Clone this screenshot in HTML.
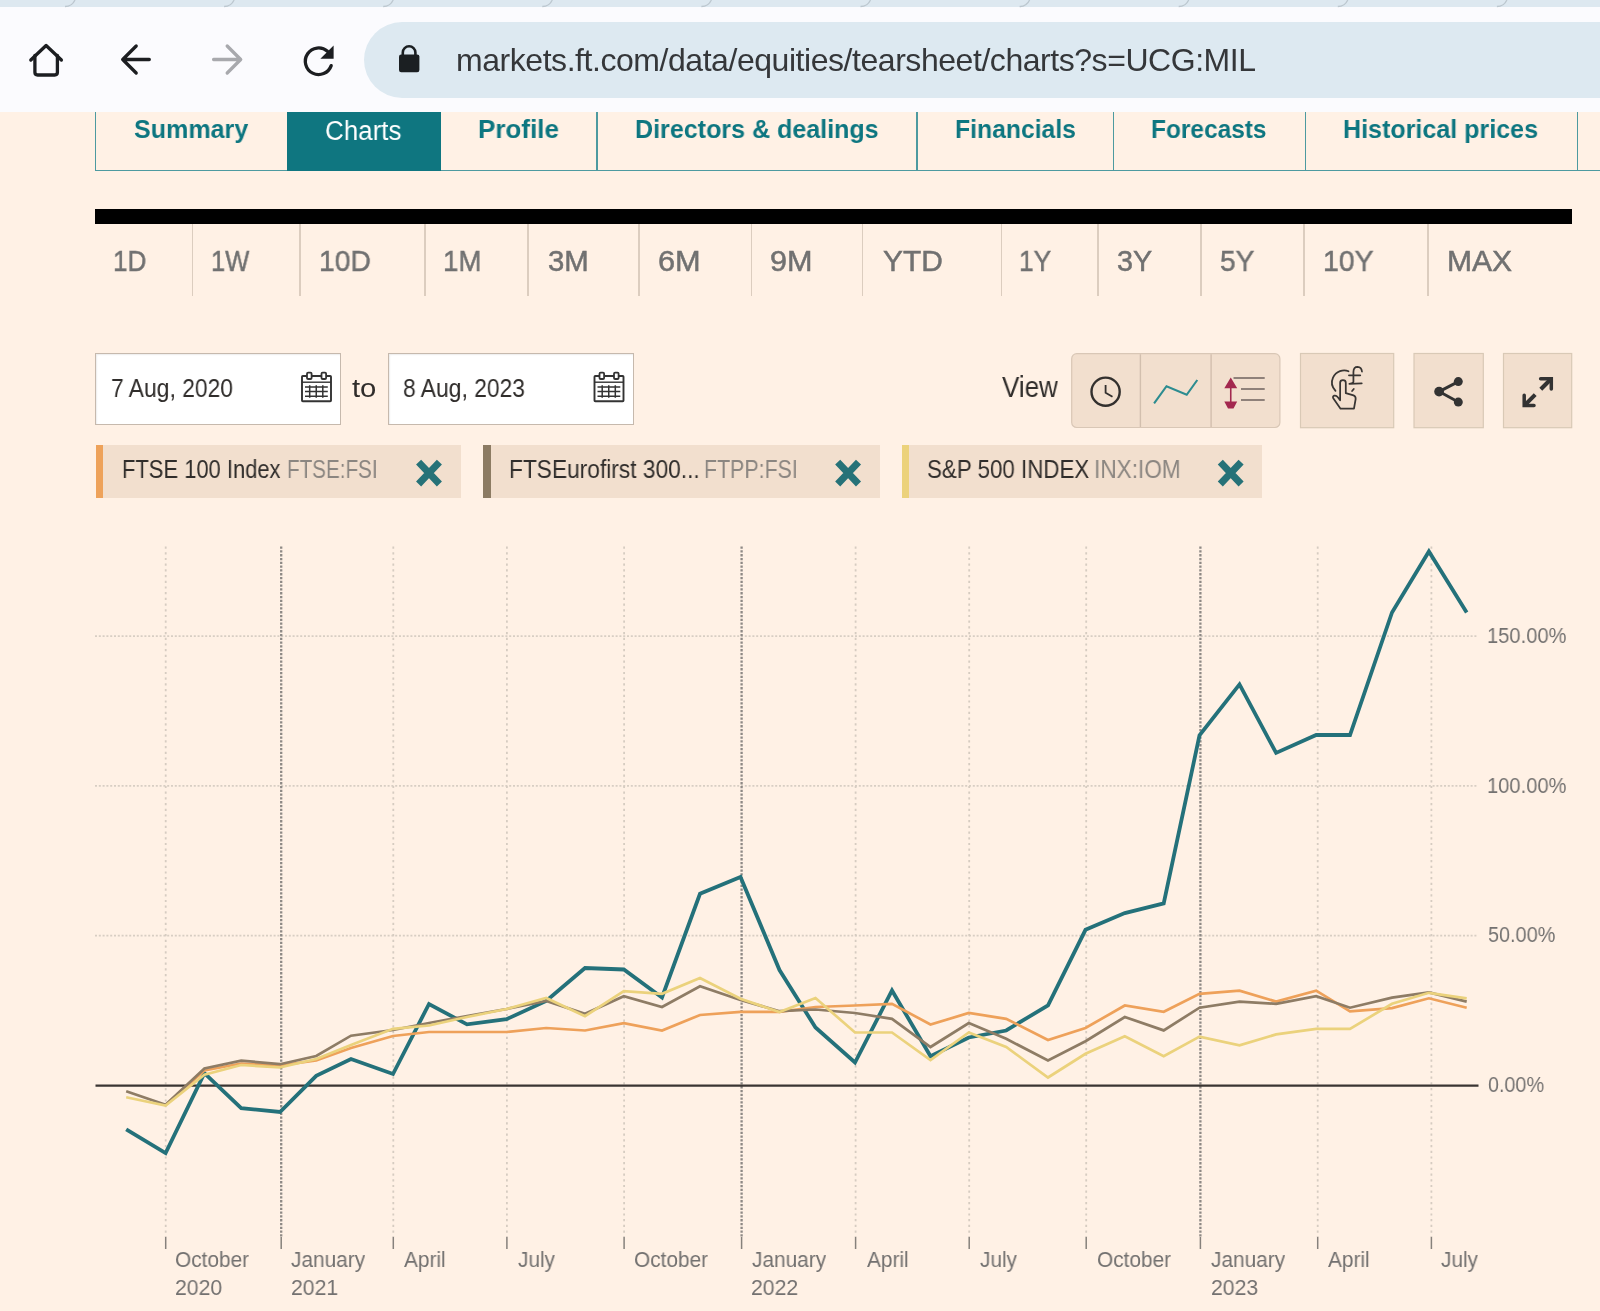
<!DOCTYPE html>
<html><head><meta charset="utf-8">
<style>
*{margin:0;padding:0;box-sizing:border-box}
html,body{width:1600px;height:1311px;overflow:hidden;background:#fff1e5;font-family:"Liberation Sans",sans-serif}
.abs{position:absolute}
#strip{left:0;top:0;width:1600px;height:7px;background:#dde8f0}
#toolbar{left:0;top:7px;width:1600px;height:105px;background:#fbfbfe}
#url{left:364px;top:22px;width:1300px;height:76px;border-radius:38px;background:#dde9f1}
#urltext{will-change:transform;left:456px;top:40px;font-size:32px;letter-spacing:-0.45px;color:#35373a;white-space:nowrap;line-height:40px}
.tab{position:absolute;top:112px;height:58px;font-size:25px;font-weight:bold;color:#0d7680;text-align:center;line-height:36px}
.sep{position:absolute;background:#4d9aa0;width:1.5px}
.per{position:absolute;top:240px;font-size:28px;color:#76716c;line-height:40px;white-space:nowrap}
.psep{position:absolute;top:224px;height:72px;width:1.5px;background:#dccdbf}
.datebox{position:absolute;top:353px;height:72px;width:246px;background:#fff;border:1.5px solid #c6b9ad;box-shadow:inset 1px 1px 1.5px rgba(0,0,0,.08)}
.datetxt{position:absolute;top:19px;left:15px;font-size:24px;color:#33302e;line-height:30px;white-space:nowrap}
.chip{position:absolute;top:445.2px;height:52.8px;background:#f2dfce}
.chipbar{position:absolute;left:0;top:0;width:7.6px;height:53px}
.chiptxt{position:absolute;top:11px;font-size:24px;color:#33302e;line-height:30px;white-space:nowrap}
.chiptxt span{color:#807973}
.btn{position:absolute;top:353px;height:75px;background:#f2dfce;border:1.5px solid #ddcbbb}
.ylab{position:absolute;left:1488px;font-size:20px;color:#6f6a66;line-height:24px;white-space:nowrap}
.xlab{position:absolute;top:1244px;font-size:21px;color:#6f6a66;line-height:28px;white-space:nowrap}
.t{position:absolute;white-space:nowrap;line-height:1;transform-origin:0 0;will-change:transform}
</style></head><body>
<div id="strip" class="abs"></div>
<div id="toolbar" class="abs"></div>
<div id="url" class="abs"></div>
<div id="urltext" class="abs">markets.ft.com/data/equities/tearsheet/charts?s=UCG:MIL</div>
<svg class="abs" style="left:0;top:0" width="1600" height="112" viewBox="0 0 1600 112">
<g fill="none" stroke="#bcc7cf" stroke-width="1.3"><path d="M65.0 6.5 Q72.0 6.5 75.0 0" /><path d="M224.1 6.5 Q231.1 6.5 234.1 0" /><path d="M383.2 6.5 Q390.2 6.5 393.2 0" /><path d="M542.3 6.5 Q549.3 6.5 552.3 0" /><path d="M701.4 6.5 Q708.4 6.5 711.4 0" /><path d="M860.5 6.5 Q867.5 6.5 870.5 0" /><path d="M1019.6 6.5 Q1026.6 6.5 1029.6 0" /><path d="M1178.7 6.5 Q1185.7 6.5 1188.7 0" /><path d="M1337.8 6.5 Q1344.8 6.5 1347.8 0" /><path d="M1496.9 6.5 Q1503.9 6.5 1506.9 0" /></g>
<g fill="none" stroke="#1c1e21" stroke-width="3.3" stroke-linecap="round" stroke-linejoin="round">
<path d="M30.8 60 L46.1 45.5 L61.4 60"/>
<path d="M34.9 55.5 V72.3 Q34.9 75 37.6 75 H54.7 Q57.4 75 57.4 72.3 V55.5"/>
<path d="M123.5 59.5 H149.3 M136.2 46 L122.7 59.5 L136.2 73"/>
<path d="M331.2 65.6 A13.3 13.3 0 1 1 327.5 51.3"/>
</g>
<path d="M213.6 59.5 H240.5 M227.2 46 L240.7 59.5 L227.2 73" fill="none" stroke="#a8a9ad" stroke-width="3.3" stroke-linecap="round" stroke-linejoin="round"/>
<path d="M333.6 45.6 V58.8 H320.4 Z" fill="#1c1e21"/>
<rect x="399" y="54.4" width="20.4" height="17.8" rx="2.2" fill="#1b1f22"/>
<path d="M402.8 55.5 V52.5 A6.3 6.3 0 0 1 415.4 52.5 V55.5" fill="none" stroke="#1b1f22" stroke-width="2.6"/>
</svg>
<!-- tabs -->
<div class="abs" style="left:95px;top:112px;width:1505px;height:59px;border-left:1.5px solid #4d9aa0;border-bottom:1.5px solid #4d9aa0"></div>
<div class="abs" style="left:287px;top:112px;width:153.5px;height:58.5px;background:#0f7680"></div>
<div class="sep" style="left:596.2px;top:112px;height:58px"></div>
<div class="sep" style="left:916px;top:112px;height:58px"></div>
<div class="sep" style="left:1112.8px;top:112px;height:58px"></div>
<div class="sep" style="left:1304.5px;top:112px;height:58px"></div>
<div class="sep" style="left:1576.5px;top:112px;height:58px"></div>
<div class="t" style="left:133.85px;top:116.28px;font-size:26.60px;font-weight:bold;color:#0d7680;transform:scaleX(0.9424)">Summary</div>
<div class="t" style="left:325.45px;top:117.22px;font-size:27.62px;color:#fff;transform:scaleX(0.9401)">Charts</div>
<div class="t" style="left:478.21px;top:116.28px;font-size:26.60px;font-weight:bold;color:#0d7680;transform:scaleX(0.9780)">Profile</div>
<div class="t" style="left:634.57px;top:116.28px;font-size:26.60px;font-weight:bold;color:#0d7680;transform:scaleX(0.9422)">Directors &amp; dealings</div>
<div class="t" style="left:954.79px;top:116.28px;font-size:26.60px;font-weight:bold;color:#0d7680;transform:scaleX(0.9295)">Financials</div>
<div class="t" style="left:1151.41px;top:116.28px;font-size:26.60px;font-weight:bold;color:#0d7680;transform:scaleX(0.9195)">Forecasts</div>
<div class="t" style="left:1343.27px;top:116.28px;font-size:26.60px;font-weight:bold;color:#0d7680;transform:scaleX(0.9425)">Historical prices</div>


<!-- periods -->
<div class="abs" style="left:95px;top:209px;width:1477px;height:15px;background:#000"></div>
<div class="psep" style="left:191.75px"></div>
<div class="psep" style="left:299.35px"></div>
<div class="psep" style="left:424.25px"></div>
<div class="psep" style="left:527.25px"></div>
<div class="psep" style="left:638.00px"></div>
<div class="psep" style="left:750.50px"></div>
<div class="psep" style="left:861.75px"></div>
<div class="psep" style="left:1000.50px"></div>
<div class="psep" style="left:1097.25px"></div>
<div class="psep" style="left:1200.25px"></div>
<div class="psep" style="left:1303.25px"></div>
<div class="psep" style="left:1427.25px"></div>
<div class="datebox" style="left:95px"></div>
<div class="datebox" style="left:388px"></div>
<div class="chip" style="left:95.75px;width:364.9px"><div class="chipbar" style="background:#eea25a"></div></div>
<div class="chip" style="left:483px;width:397.3px"><div class="chipbar" style="background:#8c7b63"></div></div>
<div class="chip" style="left:901.8px;width:360.2px"><div class="chipbar" style="background:#ecd27b"></div></div>
<svg class="abs" style="left:0;top:340px" width="1600" height="170" viewBox="0 340 1600 170">
<g fill="none" stroke="#333" stroke-linecap="butt">
<rect x="302" y="376" width="29" height="25.2" rx="0.8" stroke-width="1.9"/>
<path d="M302 382.2 H331" stroke-width="1.4"/>
<rect x="307" y="372.6" width="4.6" height="6.4" rx="1.1" stroke-width="1.8" fill="#fff"/>
<rect x="321.5" y="372.6" width="4.6" height="6.4" rx="1.1" stroke-width="1.8" fill="#fff"/>
<path d="M305 386.9 H327.8 M305 391.6 H327.8 M305 396.25 H327.8 M309.7 385.3 V397.8 M316.25 385.3 V397.8 M322.8 385.3 V397.8" stroke-width="1.5"/>
</g>
<g transform="translate(292.5 0)" fill="none" stroke="#333" stroke-linecap="butt">
<rect x="302" y="376" width="29" height="25.2" rx="0.8" stroke-width="1.9"/>
<path d="M302 382.2 H331" stroke-width="1.4"/>
<rect x="307" y="372.6" width="4.6" height="6.4" rx="1.1" stroke-width="1.8" fill="#fff"/>
<rect x="321.5" y="372.6" width="4.6" height="6.4" rx="1.1" stroke-width="1.8" fill="#fff"/>
<path d="M305 386.9 H327.8 M305 391.6 H327.8 M305 396.25 H327.8 M309.7 385.3 V397.8 M316.25 385.3 V397.8 M322.8 385.3 V397.8" stroke-width="1.5"/>
</g>
<!-- view group -->
<rect x="1071.7" y="353.7" width="208.2" height="73.8" rx="5" fill="#f2dfce" stroke="#d9c7b6" stroke-width="1.2"/>
<path d="M1140.4 354.3 V427 M1211.1 354.3 V427" stroke="#d2bfae" stroke-width="1.4"/>
<circle cx="1105.6" cy="391.7" r="14.1" fill="none" stroke="#33302e" stroke-width="2.4"/>
<path d="M1105.6 385.1 V392.7 L1112.5 396.8" fill="none" stroke="#33302e" stroke-width="1.8"/>
<path d="M1154.1 403.3 L1166.5 386.2 L1186.7 394.8 L1197.3 380" fill="none" stroke="#2c8c90" stroke-width="2.1"/>
<path d="M1230.75 384 V403" stroke="#a3284f" stroke-width="1.6"/>
<path d="M1230.75 377.4 L1237.2 388.2 H1224.3 Z M1224.3 401.5 H1237.2 L1233.5 408.4 H1228 Z" fill="#a3284f"/>
<path d="M1233.5 378 H1264.7 M1241 388.9 H1264.7 M1241 400 H1264.7" stroke="#8f817a" stroke-width="2"/>
<!-- buttons -->
<rect x="1300.5" y="353.5" width="93.2" height="74.2" fill="#f2dfce" stroke="#d9c9b6" stroke-width="1.2"/>
<rect x="1414" y="353.5" width="69.3" height="74.2" fill="#f2dfce" stroke="#d9c9b6" stroke-width="1.2"/>
<rect x="1503.5" y="353.5" width="68.2" height="74.2" fill="#f2dfce" stroke="#d9c9b6" stroke-width="1.2"/>
<g transform="translate(1320 360) scale(0.041946)" fill="none" stroke="#383533" stroke-width="42" stroke-linecap="round" stroke-linejoin="round">
<path d="M680 268 C560 215 380 260 310 420 C255 540 290 650 370 735"/>
<path d="M615 540 L615 790 L800 845 Q855 865 850 930 L810 1160 L490 1160 L320 920 Q290 870 340 850 Q400 830 480 960 L480 540 Q480 480 548 480 Q615 480 615 540 Z"/>
<path d="M765 740 L805 690"/>
<path d="M1000 275 Q990 170 895 165 Q800 165 797 285 L797 520 Q790 560 700 568 M700 568 L995 555 M690 365 L960 365"/>
</g>
<g fill="#333" stroke="#333">
<path d="M1439.1 391.6 L1458.3 381.6 M1439.1 391.6 L1458.3 402.1" stroke-width="2.9" fill="none"/>
<circle cx="1458.3" cy="381.6" r="4.5" stroke="none"/>
<circle cx="1439.1" cy="391.6" r="4.9" stroke="none"/>
<circle cx="1458.3" cy="402.1" r="4.5" stroke="none"/>
</g>
<g stroke="#333" fill="none" stroke-linecap="round" stroke-linejoin="miter" stroke-width="3.5">
<path d="M1540.6 378.7 H1551.3 V389"/>
<path d="M1524.2 395.3 V405.4 H1534"/>
</g>
<path d="M1551 379 L1540.8 389.2 M1535.2 394.6 L1524.6 405.2" stroke="#333" stroke-width="4.1"/>
<g stroke="#267278" stroke-width="7" stroke-linecap="butt">
<path d="M418.6 462.2 L439.4 484 M439.4 462.2 L418.6 484"/>
<path d="M837.7 462.2 L858.5 484 M858.5 462.2 L837.7 484"/>
<path d="M1220.3 462.2 L1241.1 484 M1241.1 462.2 L1220.3 484"/>
</g>
</svg>

<div class="t" style="left:112.95px;top:246.64px;font-size:28.78px;color:#717171;transform:scaleX(0.9055);-webkit-text-stroke:0.5px #717171">1D</div>
<div class="t" style="left:210.98px;top:246.64px;font-size:28.78px;color:#717171;transform:scaleX(0.8883);-webkit-text-stroke:0.5px #717171">1W</div>
<div class="t" style="left:318.78px;top:246.64px;font-size:28.78px;color:#717171;transform:scaleX(0.9825);-webkit-text-stroke:0.5px #717171">10D</div>
<div class="t" style="left:442.52px;top:246.64px;font-size:28.78px;color:#717171;transform:scaleX(0.9633);-webkit-text-stroke:0.5px #717171">1M</div>
<div class="t" style="left:548.43px;top:246.64px;font-size:28.78px;color:#717171;transform:scaleX(1.0191);-webkit-text-stroke:0.5px #717171">3M</div>
<div class="t" style="left:658.36px;top:246.64px;font-size:28.78px;color:#717171;transform:scaleX(1.0687);-webkit-text-stroke:0.5px #717171">6M</div>
<div class="t" style="left:769.52px;top:246.64px;font-size:28.78px;color:#717171;transform:scaleX(1.0645);-webkit-text-stroke:0.5px #717171">9M</div>
<div class="t" style="left:882.65px;top:246.64px;font-size:28.78px;color:#717171;transform:scaleX(1.0388);-webkit-text-stroke:0.5px #717171">YTD</div>
<div class="t" style="left:1018.93px;top:246.64px;font-size:28.78px;color:#717171;transform:scaleX(0.9142);-webkit-text-stroke:0.5px #717171">1Y</div>
<div class="t" style="left:1117.26px;top:246.64px;font-size:28.78px;color:#717171;transform:scaleX(0.9915);-webkit-text-stroke:0.5px #717171">3Y</div>
<div class="t" style="left:1219.78px;top:246.64px;font-size:28.78px;color:#717171;transform:scaleX(0.9765);-webkit-text-stroke:0.5px #717171">5Y</div>
<div class="t" style="left:1322.52px;top:246.64px;font-size:28.78px;color:#717171;transform:scaleX(0.9876);-webkit-text-stroke:0.5px #717171">10Y</div>
<div class="t" style="left:1447.24px;top:246.64px;font-size:28.78px;color:#717171;transform:scaleX(1.0449);-webkit-text-stroke:0.5px #717171">MAX</div>
<div class="t" style="left:110.76px;top:375.25px;font-size:26.16px;color:#302d2b;transform:scaleX(0.8737)">7 Aug, 2020</div>
<div class="t" style="left:402.57px;top:375.25px;font-size:26.16px;color:#302d2b;transform:scaleX(0.8737)">8 Aug, 2023</div>
<div class="t" style="left:351.76px;top:374.89px;font-size:26.00px;color:#302d2b;transform:scaleX(1.1243)">to</div>
<div class="t" style="left:1002.37px;top:373.06px;font-size:28.63px;color:#302d2b;transform:scaleX(0.9085)">View</div>
<div class="t" style="left:122.24px;top:458.36px;font-size:24.85px;color:#302d2b;transform:scaleX(0.8831)">FTSE 100 Index</div>
<div class="t" style="left:286.85px;top:458.36px;font-size:24.85px;color:#8b8681;transform:scaleX(0.8305)">FTSE:FSI</div>
<div class="t" style="left:508.88px;top:458.36px;font-size:24.85px;color:#302d2b;transform:scaleX(0.9148)">FTSEurofirst 300...</div>
<div class="t" style="left:703.69px;top:458.36px;font-size:24.85px;color:#8b8681;transform:scaleX(0.8600)">FTPP:FSI</div>
<div class="t" style="left:927.49px;top:458.36px;font-size:24.85px;color:#302d2b;transform:scaleX(0.8997)">S&amp;P 500 INDEX</div>
<div class="t" style="left:1093.76px;top:458.36px;font-size:24.85px;color:#8b8681;transform:scaleX(0.9102)">INX:IOM</div>

<!-- chart -->
<svg class="abs" style="left:0;top:520px" width="1600" height="791" viewBox="0 520 1600 791">
<g stroke="#d8cec3" stroke-width="1.8" stroke-dasharray="2 1.8">
<path d="M95 636.1 H1477"/>
<path d="M95 785.9 H1477"/>
<path d="M95 935.7 H1477"/>
</g>
<g stroke="#d6ccc1" stroke-width="1.8" stroke-dasharray="2.2 3.5">
<path d="M165.7 546.5 V1237"/>
<path d="M393.3 546.5 V1237"/>
<path d="M506.9 546.5 V1237"/>
<path d="M624.1 546.5 V1237"/>
<path d="M855.6 546.5 V1237"/>
<path d="M969.2 546.5 V1237"/>
<path d="M1086.2 546.5 V1237"/>
<path d="M1317.7 546.5 V1237"/>
<path d="M1431.4 546.5 V1237"/>
</g>
<g stroke="#8e8985" stroke-width="2.3" stroke-dasharray="2.3 1.5">
<path d="M281.2 546.5 V1237"/>
<path d="M741.6 546.5 V1237"/>
<path d="M1200.4 546.5 V1237"/>
</g>
<g stroke="#86817c" stroke-width="1.5">
<path d="M165.7 1237 V1249"/>
<path d="M281.2 1237 V1249"/>
<path d="M393.3 1237 V1249"/>
<path d="M506.9 1237 V1249"/>
<path d="M624.1 1237 V1249"/>
<path d="M741.6 1237 V1249"/>
<path d="M855.6 1237 V1249"/>
<path d="M969.2 1237 V1249"/>
<path d="M1086.2 1237 V1249"/>
<path d="M1200.4 1237 V1249"/>
<path d="M1317.7 1237 V1249"/>
<path d="M1431.4 1237 V1249"/>
</g>
<path d="M95.5 1085.6 H1478.5" stroke="#3a3532" stroke-width="2.2"/>
<polyline points="126.2,1129.4 165.6,1153.1 204.4,1073.1 241.2,1108.1 280.0,1112.0 316.2,1075.8 351.0,1059.0 393.0,1074.0 429.0,1004.0 467.0,1024.4 506.5,1019.2 546.2,1001.0 585.0,968.0 623.8,969.5 662.0,997.5 700.0,893.8 740.5,876.9 779.5,970.0 815.5,1027.5 855.0,1062.5 892.0,990.5 930.5,1056.2 968.8,1037.5 1006.2,1030.5 1048.0,1005.3 1085.5,929.8 1124.8,913.1 1163.7,903.4 1199.5,735.4 1239.5,684.4 1276.1,752.9 1316.2,735.0 1350.0,735.0 1392.0,612.5 1428.9,551.4 1466.7,612.5" fill="none" stroke="#24717a" stroke-width="3.8" stroke-linejoin="miter"/>
<polyline points="165.6,1105.0 204.4,1070.5 241.2,1063.5 280.0,1065.5 316.2,1060.4 351.0,1048.0 393.0,1036.0 429.0,1032.0 467.0,1032.0 506.5,1032.0 546.2,1028.0 585.0,1030.5 623.8,1023.2 662.0,1030.5 700.0,1015.0 740.5,1011.8 779.5,1011.8 815.5,1007.0 855.0,1005.5 892.0,1003.8 930.5,1024.5 968.8,1013.0 1006.2,1018.8 1048.0,1040.0 1085.5,1028.0 1124.8,1005.5 1163.7,1011.8 1199.5,993.9 1239.5,990.6 1276.1,1001.6 1316.2,990.6 1350.0,1011.4 1392.0,1008.1 1428.9,998.3 1466.7,1007.7" fill="none" stroke="#eea15a" stroke-width="2.7" stroke-linejoin="miter"/>
<polyline points="126.2,1091.2 165.6,1104.8 204.4,1068.5 241.2,1060.6 280.0,1064.2 316.2,1056.0 351.0,1035.7 393.0,1030.0 429.0,1023.0 467.0,1016.0 506.5,1009.0 546.2,1001.0 585.0,1013.8 623.8,996.2 662.0,1007.0 700.0,986.2 740.5,1000.0 779.5,1011.2 815.5,1009.5 855.0,1013.0 892.0,1018.8 930.5,1047.0 968.8,1023.0 1006.2,1038.8 1048.0,1060.5 1085.5,1041.2 1124.8,1017.0 1163.7,1030.4 1199.5,1007.7 1239.5,1001.6 1276.1,1003.8 1316.2,996.1 1350.0,1007.7 1392.0,997.6 1428.9,992.4 1466.7,1001.6" fill="none" stroke="#8e7c65" stroke-width="2.7" stroke-linejoin="miter"/>
<polyline points="126.2,1097.2 165.6,1105.6 204.4,1074.8 241.2,1065.0 280.0,1067.5 316.2,1059.0 351.0,1045.0 393.0,1028.8 429.0,1025.5 467.0,1017.0 506.5,1009.0 546.2,998.0 585.0,1016.2 623.8,991.2 662.0,993.8 700.0,978.0 740.5,998.8 779.5,1012.0 815.5,998.0 855.0,1032.5 892.0,1032.5 930.5,1060.0 968.8,1032.5 1006.2,1047.0 1048.0,1077.5 1085.5,1053.8 1124.8,1036.2 1163.7,1056.2 1199.5,1036.6 1239.5,1045.3 1276.1,1034.4 1316.2,1028.9 1350.0,1028.9 1392.0,1003.8 1428.9,992.8 1466.7,998.3" fill="none" stroke="#ebd27c" stroke-width="2.7" stroke-linejoin="miter"/>
</svg>

<div class="t" style="left:1486.99px;top:624.77px;font-size:21.66px;color:#737170;transform:scaleX(0.9295)">150.00%</div>
<div class="t" style="left:1486.99px;top:774.57px;font-size:21.66px;color:#737170;transform:scaleX(0.9295)">100.00%</div>
<div class="t" style="left:1487.71px;top:924.47px;font-size:21.66px;color:#737170;transform:scaleX(0.9165)">50.00%</div>
<div class="t" style="left:1487.71px;top:1074.17px;font-size:21.66px;color:#737170;transform:scaleX(0.9118)">0.00%</div>
<div class="t" style="left:175.26px;top:1248.74px;font-size:21.80px;color:#737170;transform:scaleX(0.9550)">October</div>
<div class="t" style="left:175.14px;top:1276.54px;font-size:21.80px;color:#737170;transform:scaleX(0.9750)">2020</div>
<div class="t" style="left:291.39px;top:1248.74px;font-size:21.80px;color:#737170;transform:scaleX(0.9550)">January</div>
<div class="t" style="left:290.64px;top:1276.54px;font-size:21.80px;color:#737170;transform:scaleX(0.9750)">2021</div>
<div class="t" style="left:403.80px;top:1248.74px;font-size:21.80px;color:#737170;transform:scaleX(0.9550)">April</div>
<div class="t" style="left:517.69px;top:1248.74px;font-size:21.80px;color:#737170;transform:scaleX(0.9550)">July</div>
<div class="t" style="left:634.16px;top:1248.74px;font-size:21.80px;color:#737170;transform:scaleX(0.9550)">October</div>
<div class="t" style="left:752.09px;top:1248.74px;font-size:21.80px;color:#737170;transform:scaleX(0.9550)">January</div>
<div class="t" style="left:751.34px;top:1276.54px;font-size:21.80px;color:#737170;transform:scaleX(0.9750)">2022</div>
<div class="t" style="left:866.60px;top:1248.74px;font-size:21.80px;color:#737170;transform:scaleX(0.9550)">April</div>
<div class="t" style="left:979.89px;top:1248.74px;font-size:21.80px;color:#737170;transform:scaleX(0.9550)">July</div>
<div class="t" style="left:1097.36px;top:1248.74px;font-size:21.80px;color:#737170;transform:scaleX(0.9550)">October</div>
<div class="t" style="left:1211.39px;top:1248.74px;font-size:21.80px;color:#737170;transform:scaleX(0.9550)">January</div>
<div class="t" style="left:1210.64px;top:1276.54px;font-size:21.80px;color:#737170;transform:scaleX(0.9750)">2023</div>
<div class="t" style="left:1327.70px;top:1248.74px;font-size:21.80px;color:#737170;transform:scaleX(0.9550)">April</div>
<div class="t" style="left:1440.79px;top:1248.74px;font-size:21.80px;color:#737170;transform:scaleX(0.9550)">July</div>

</body></html>
